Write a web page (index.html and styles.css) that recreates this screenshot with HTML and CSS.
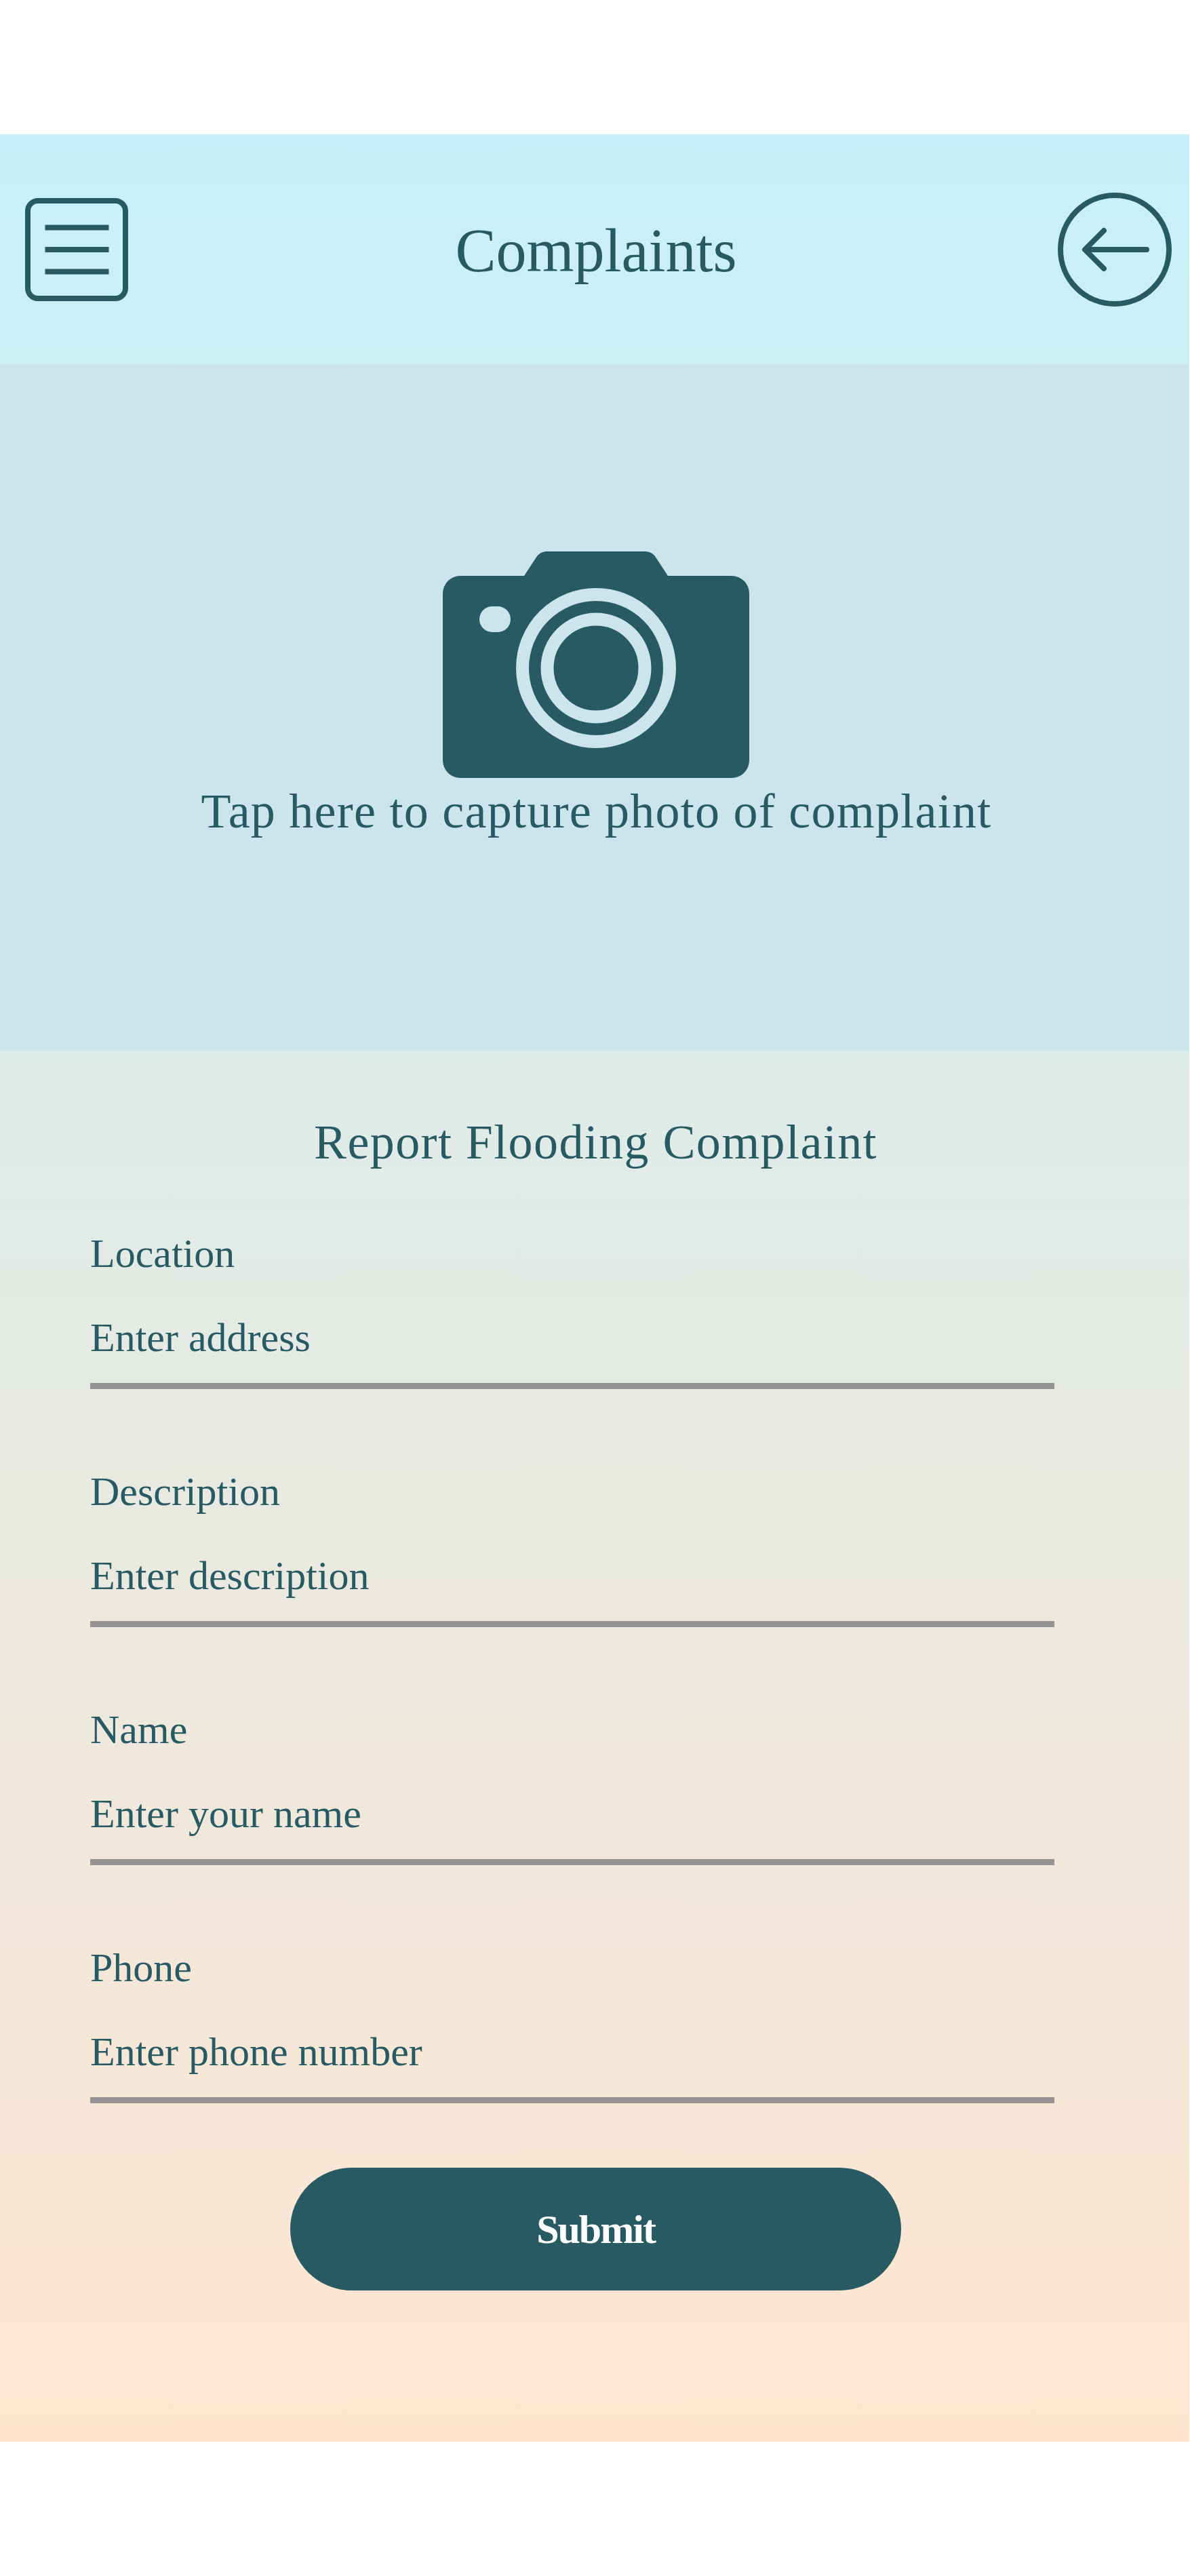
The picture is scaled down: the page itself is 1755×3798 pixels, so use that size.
FILE: index.html
```html
<!DOCTYPE html>
<html lang="en">
<head>
<meta charset="utf-8">
<title>Complaints</title>
<link rel="stylesheet" href="styles.css">
</head>
<body>
<main class="app">
  <header class="header">
    <svg class="menu-icon" viewBox="0 0 152 152" fill="none" stroke="currentColor" stroke-width="8" aria-label="Menu">
      <rect x="4" y="4" width="144" height="144" rx="15"/>
      <path d="M29.500 43.500H123.500M29.500 76H123.500M29.500 108.500H123.500"/>
    </svg>
    <h1 class="title">Complaints</h1>
    <svg class="back-icon" viewBox="0 0 168 168" fill="none" stroke="currentColor" stroke-width="8" aria-label="Back">
      <circle cx="84" cy="84" r="80"/>
      <path d="M131 84H41M68 56L40 84L68 112" stroke-linejoin="round" stroke-linecap="round"/>
    </svg>
  </header>
  <section class="capture">
    <svg class="camera" viewBox="0 0 452 334">
      <path fill="currentColor" d="M26 36H120L137 10Q143 0 153 0H299Q309 0 315 10L332 36H426A26 26 0 0 1 452 62V308A26 26 0 0 1 426 334H26A26 26 0 0 1 0 308V62A26 26 0 0 1 26 36Z"/>
      <g fill="none" stroke="#cce5ec">
        <circle cx="226" cy="172" r="108.500" stroke-width="19"/>
        <circle cx="226" cy="172" r="72" stroke-width="19"/>
      </g>
      <rect x="54" y="81" width="46" height="38" rx="19" fill="#cce5ec"/>
    </svg>
    <p class="caption">Tap here to capture photo of complaint</p>
  </section>
  <form class="report">
    <h2 class="subtitle">Report Flooding Complaint</h2>
    <div class="fields">
      <label class="field">Location<input type="text" placeholder="Enter address"></label>
      <label class="field">Description<input type="text" placeholder="Enter description"></label>
      <label class="field">Name<input type="text" placeholder="Enter your name"></label>
      <label class="field">Phone<input type="text" placeholder="Enter phone number"></label>
    </div>
    <button class="submit" type="button">Submit</button>
  </form>
</main>
</body>
</html>
```
FILE: styles.css
```css
* { box-sizing: border-box; }
body {
  margin: 0;
  padding: 198px 1px 198px 0;
  background: #fff;
  color: #285a64;
  font-family: "Liberation Serif", "Times New Roman", serif;
}
.app {
  height: 3402px;
  background: linear-gradient(#c8f0fa, #ffe5d0);
}
.header {
  display: flex;
  align-items: center;
  justify-content: space-between;
  height: 340px;
  padding: 0 26px 0 37px;
}
.menu-icon { width: 152px; height: 152px; margin-right: 9px; }
.back-icon { width: 168px; height: 168px; }
.title {
  margin: 0;
  padding-top: 3px;
  font-size: 90px;
  font-weight: 400;
  line-height: 100px;
}
.capture {
  display: flex;
  flex-direction: column;
  align-items: center;
  height: 1012px;
  padding: 275px 0 0 3px;
  background: #cce5ec;
}
.camera { width: 452px; height: 334px; }
.caption {
  margin: 9px 0 0;
  padding-left: 2px;
  font-size: 72px;
  line-height: 80px;
  letter-spacing: 1.25px;
}
.report {
  display: flex;
  flex-direction: column;
  align-items: center;
  padding-top: 94px;
}
.subtitle {
  margin: 0;
  padding-left: 3px;
  font-size: 72px;
  font-weight: 400;
  line-height: 80px;
  letter-spacing: 1.4px;
}
.fields {
  display: flex;
  flex-direction: column;
  align-self: flex-start;
  gap: 115px;
  width: 1422px;
  margin: 89px 0 0 133px;
}
.field {
  display: flex;
  flex-direction: column;
  height: 236px;
  font-size: 60px;
  line-height: 70px;
}
.field input {
  height: 165px;
  padding: 54px 0 32px;
  border: 0;
  border-bottom: 9px solid #969394;
  border-radius: 0;
  outline: 0;
  background: transparent;
  color: inherit;
  font: inherit;
}
.field input::placeholder { color: inherit; opacity: 1; }
.submit {
  width: 901px;
  height: 181px;
  margin: 94px 0 0 3px;
  padding: 0;
  border: 0;
  border-radius: 91px;
  background: #285a64;
  color: #fff;
  font: 700 60px/70px "Liberation Serif", "Times New Roman", serif;
  letter-spacing: -2px;
}
```
